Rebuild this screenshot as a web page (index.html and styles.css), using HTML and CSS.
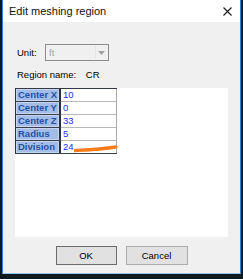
FILE: index.html
```html
<!DOCTYPE html>
<html lang="en">
<head>
    <meta charset="UTF-8">
    <title>Edit meshing region</title>
    <link rel="stylesheet" href="styles.css">
</head>
<body>
    <div class="dialog">
        <div class="titlebar">
            <span class="title">Edit meshing region</span>
            <svg class="close" width="9" height="9" viewBox="0 0 9 9">
                <path d="M0.5 0.5 L8.5 8.5 M8.5 0.5 L0.5 8.5" stroke="#1a1a1a" stroke-width="1.1" fill="none"/>
            </svg>
        </div>
        <div class="content">
            <div class="unit-row">
                <span class="label">Unit:</span>
                <div class="combo">
                    <span class="combo-text">ft</span>
                    <span class="combo-arrow">
                        <svg width="7" height="4" viewBox="0 0 7 4"><path d="M0 0 H7 L3.5 4 Z" fill="#a0a0a0"/></svg>
                    </span>
                </div>
            </div>
            <div class="region-row">
                <span>Region name:</span>
                <span class="region-value">CR</span>
            </div>
            <div class="panel">
                <div class="grid">
                    <div class="row"><div class="head">Center X</div><div class="val">10</div></div>
                    <div class="row"><div class="head">Center Y</div><div class="val">0</div></div>
                    <div class="row"><div class="head">Center Z</div><div class="val">33</div></div>
                    <div class="row"><div class="head">Radius</div><div class="val">5</div></div>
                    <div class="row"><div class="head">Division</div><div class="val">24</div></div>
                    <svg class="scribble" width="44" height="9" viewBox="0 0 44 9">
                        <path d="M1 6.5 C10 6, 20 5.5, 30 4.5 C36 4, 40 3, 42 3" stroke="#ff7b1c" stroke-width="3.4" stroke-linecap="round" fill="none"/>
                    </svg>
                </div>
            </div>
            <div class="buttons">
                <button class="btn default">OK</button>
                <button class="btn">Cancel</button>
            </div>
        </div>
    </div>
</body>
</html>
```
FILE: styles.css
```css
body {
    margin: 0;
    background-color: #0c1b1e;
    font-family: "Liberation Sans", Arial, sans-serif;
    font-size: 9.5px;
    color: #000;
}
.dialog {
    margin-left: 2px;
    width: 237px;
    height: 273px;
    border-left: 1px solid #2f82d6;
    border-right: 1px solid #2f82d6;
    border-bottom: 1px solid #9cc2ea;
    background-color: #f0f0f0;
    display: flex;
    flex-direction: column;
}
.titlebar {
    position: relative;
    height: 22px;
    background-color: #fff;
    display: flex;
    align-items: center;
    padding-left: 6px;
}
.title {
    font-size: 11px;
    color: #111;
}
.close {
    position: absolute;
    left: 220px;
    top: 7px;
}
.content {
    padding-left: 12px;
    display: flex;
    flex-direction: column;
}
.unit-row {
    margin-top: 22px;
    display: flex;
    align-items: center;
    height: 17px;
}
.label {
    width: 28px;
    padding-left: 2px;
}
.combo {
    width: 62px;
    height: 15px;
    border: 1px solid #8c8c8c;
    background-color: #f0f0f0;
    display: flex;
    align-items: center;
    justify-content: space-between;
}
.combo-text {
    color: #a6a6a6;
    padding-left: 3px;
}
.combo-arrow {
    width: 11px;
    height: 13px;
    margin-right: 1px;
    border-left: 1px solid #e4e4e4;
    display: flex;
    align-items: center;
    justify-content: center;
}
.region-row {
    margin-top: 7px;
    height: 14px;
    line-height: 14px;
    padding-left: 2px;
}
.region-value {
    margin-left: 7px;
}
.panel {
    margin-top: 6px;
    width: 213px;
    height: 149px;
    background-color: #fff;
}
.grid {
    position: relative;
    width: 102px;
    border-top: 1px solid #333a45;
}
.row {
    display: flex;
    height: 12px;
    border-bottom: 1px solid #3a404a;
}
.head {
    width: 41px;
    border-left: 1px solid #2a303a;
    border-right: 2px solid #2a303a;
    background-color: #a4bde8;
    box-shadow: inset 0 0 0 1px #c4d5f2;
    color: #2450a4;
    font-weight: bold;
    font-size: 9.5px;
    line-height: 12px;
    padding-left: 2px;
}
.val {
    flex: 1;
    border-right: 1px solid #a8a8a8;
    color: #2a2aff;
    line-height: 12px;
    padding-left: 2px;
}
.row:not(:last-of-type) .val {
    border-bottom: 1px solid #b8b8b8;
    margin-bottom: -1px;
}
.scribble {
    position: absolute;
    left: 59px;
    top: 55px;
}
.buttons {
    margin-top: 9px;
    margin-left: -12px;
    display: flex;
    justify-content: center;
    gap: 9px;
}
.btn {
    width: 62px;
    height: 19px;
    padding: 0;
    font-family: "Liberation Sans", Arial, sans-serif;
    font-size: 9.5px;
    color: #000;
    background-color: #e1e1e1;
    border: 1px solid #adadad;
    border-radius: 0;
}
.btn.default {
    width: 61px;
    border: 1px solid #6b6b6b;
}
```
